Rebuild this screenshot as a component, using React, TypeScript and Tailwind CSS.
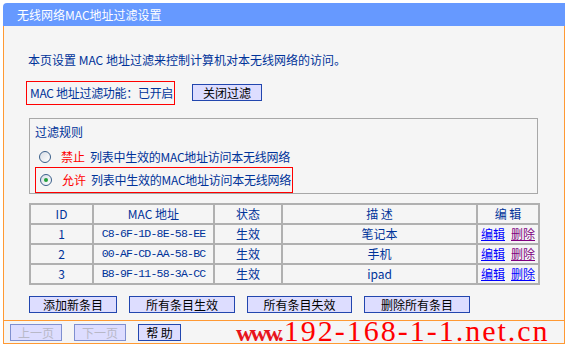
const ROWS = [
  { id: 1, mac: "C8-6F-1D-8E-58-EE", desc: "笔记本", visited: true },
  { id: 2, mac: "00-AF-CD-AA-58-BC", desc: "手机", visited: true },
  { id: 3, mac: "B8-9F-11-58-3A-CC", desc: "ipad", visited: false },
];

const Btn = ({ label, w, disabled }: { label: string; w: string; disabled?: boolean }) => (
  <button
    className={`${w} h-[17px] border bg-[#DDDDFF] text-[12px] leading-[15px] whitespace-nowrap ${
      disabled ? "border-[#7F8FD0] text-[#B8B8C8]" : "border-[#2246AE] text-black"
    }`}
  >
    {label}
  </button>
);

const Radio = ({ checked }: { checked?: boolean }) => (
  <span className="flex shrink-0 items-center justify-center w-[12px] h-[12px] rounded-full border border-[#3A5F8A] bg-gradient-to-br from-[#D8DEE6] to-white">
    {checked && <span className="w-[4px] h-[4px] rounded-full bg-[#22A03A]" />}
  </span>
);

export default function App() {
  return (
    <div
      className="w-[568px] h-[348px] bg-white pt-[3px] pl-[3px] text-[12px] text-[#003399] overflow-hidden"
      style={{ fontFamily: '"Noto Sans CJK SC", "Noto Sans", sans-serif' }}
    >
      <div className="w-[562px]">
        {/* title bar */}
        <div className="h-[23px] bg-[#6699FF] rounded-tl-[4px] pl-[14px] text-white leading-[23px]">
          无线网络MAC地址过滤设置
        </div>

        <div className="h-[318px] bg-[#F5F5F5] border-l border-r border-b border-[#FF9933] flex flex-col">
          <div className="pl-[24px] mt-[27px] leading-[14px] whitespace-nowrap">
            本页设置 MAC 地址过滤来控制计算机对本无线网络的访问。
          </div>

          <div className="flex items-center ml-[22px] mt-[14px]">
            <div className="w-[149px] h-[24px] border border-[#FF0000] pl-[3px] leading-[22px] whitespace-nowrap tracking-[-0.3px]">
              MAC 地址过滤功能：已开启
            </div>
            <div className="ml-[17px]">
              <Btn label="关闭过滤" w="w-[70px]" />
            </div>
          </div>

          {/* filter rules */}
          <div className="ml-[25px] mt-[13px] w-[509px] h-[77px] border border-[#A8A8A8] pl-[5px] pt-[6px] whitespace-nowrap">
            <div className="leading-[14px]">过滤规则</div>
            <div className="flex items-center h-[14px] mt-[11px] pl-[4px]">
              <Radio />
              <span className="ml-[10px] text-[#FF0000]">禁止</span>
              <span className="ml-[5px] tracking-[-0.25px]">列表中生效的MAC地址访问本无线网络</span>
            </div>
            <div className="flex items-center w-[258px] h-[26px] mt-[3px] border border-[#FF0000] pl-[4px]">
              <Radio checked />
              <span className="ml-[10px] text-[#FF0000]">允许</span>
              <span className="ml-[5px] tracking-[-0.25px]">列表中生效的MAC地址访问本无线网络</span>
            </div>
          </div>

          {/* table */}
          <table className="ml-[25px] mt-[9px] w-[509px] border-collapse table-fixed text-center">
            <colgroup>
              <col className="w-[63px]" />
              <col className="w-[121px]" />
              <col className="w-[68px]" />
              <col className="w-[195px]" />
              <col className="w-[62px]" />
            </colgroup>
            <thead>
              <tr className="h-[20px]">
                {["ID", "MAC 地址", "状态", "描 述", "编 辑"].map((h) => (
                  <th key={h} className="border-2 border-[#B0B0B0] font-normal leading-[16px] p-0">
                    {h}
                  </th>
                ))}
              </tr>
            </thead>
            <tbody>
              {ROWS.map((r) => (
                <tr key={r.id} className="h-[20px]">
                  <td className="border-2 border-[#B0B0B0] leading-[16px] p-0">{r.id}</td>
                  <td
                    className="border-2 border-[#B0B0B0] leading-[16px] p-0 text-[11.5px] tracking-[-0.8px]"
                    style={{ fontFamily: '"Liberation Mono", monospace' }}
                  >
                    {r.mac}
                  </td>
                  <td className="border-2 border-[#B0B0B0] leading-[16px] p-0">生效</td>
                  <td className="border-2 border-[#B0B0B0] leading-[16px] p-0">{r.desc}</td>
                  <td className="border-2 border-[#B0B0B0] leading-[16px] p-0 whitespace-nowrap">
                    <span className="text-[#0000FF] underline">编辑</span>
                    <span className={`ml-[6px] underline ${r.visited ? "text-[#800080]" : "text-[#0000FF]"}`}>
                      删除
                    </span>
                  </td>
                </tr>
              ))}
            </tbody>
          </table>

          <div className="flex ml-[25px] mt-[11px] gap-[12px]">
            <Btn label="添加新条目" w="w-[88px]" />
            <Btn label="所有条目生效" w="w-[106px]" />
            <Btn label="所有条目失效" w="w-[105px]" />
            <Btn label="删除所有条目" w="w-[106px]" />
          </div>

          <div className="mt-[7px] border-t border-[#FF9933] flex items-start pl-[6px] h-[24px]">
            <div className="flex gap-[12px] mt-[3px]">
              <Btn label="上一页" w="w-[52px]" disabled />
              <Btn label="下一页" w="w-[52px]" disabled />
              <Btn label="帮 助" w="w-[43px]" />
            </div>
            <div
              className="ml-[55px] whitespace-nowrap leading-[20px] text-[#FF0000]"
              style={{ fontFamily: '"Liberation Serif", serif' }}
            >
              <span className="text-[24px] font-bold tracking-[-3px] text-[#E8141C]">www.</span>
              <span className="text-[30px] tracking-[2px] ml-[3px]">192-168-1-1.net.cn</span>
            </div>
          </div>
        </div>
      </div>
    </div>
  );
}
